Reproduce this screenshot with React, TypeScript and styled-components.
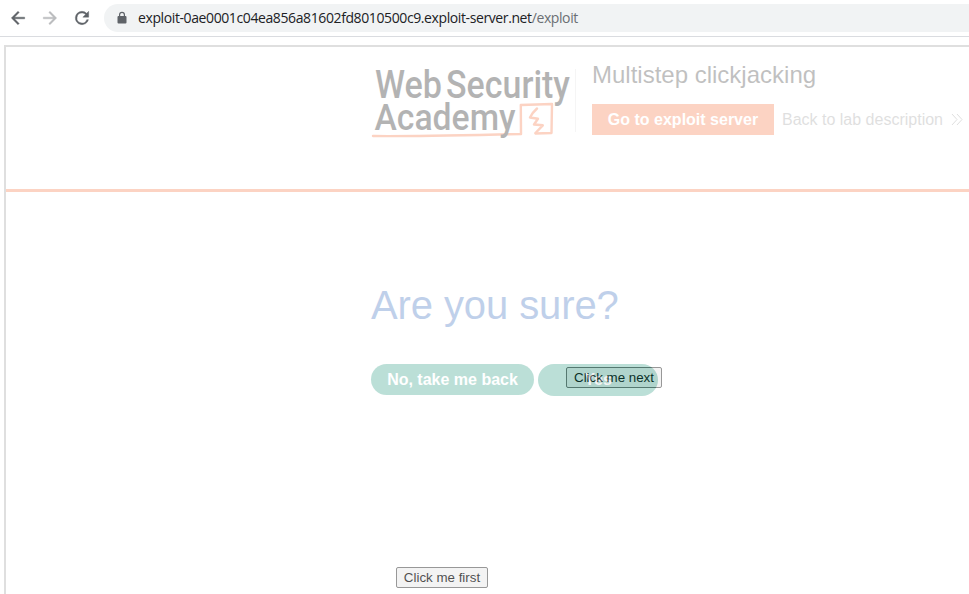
import React from 'react';
import styled, { createGlobalStyle } from 'styled-components';

const GlobalStyle = createGlobalStyle`
  *, *::before, *::after { box-sizing: border-box; }
  html, body { margin: 0; padding: 0; height: 100%; overflow: hidden; background: #fff; }
  body { font-family: "Liberation Sans", Arial, sans-serif; }
`;

const Browser = styled.div`
  display: flex;
  flex-direction: column;
  height: 594px;
  overflow: hidden;
`;

const Toolbar = styled.header`
  display: flex;
  align-items: center;
  height: 37px;
  flex: none;
  padding-left: 8px;
  border-bottom: 1px solid #dadce0;
`;

const NavIcon = styled.svg<{ $muted?: boolean }>`
  width: 20px;
  height: 20px;
  margin-right: 12px;
  flex: none;
  fill: ${(p) => (p.$muted ? '#babcbe' : '#5f6368')};
  stroke: ${(p) => (p.$muted ? '#babcbe' : '#5f6368')};
  stroke-width: 0.5;
`;

const AddressBar = styled.div`
  display: flex;
  align-items: center;
  flex: 1;
  height: 28px;
  padding-left: 11px;
  border-radius: 14px 0 0 14px;
  background: #f1f3f4;
`;

const LockIcon = styled.svg`
  width: 14px;
  height: 14px;
  margin-right: 9px;
  fill: #5f6368;
`;

const Url = styled.span`
  font: 14px/28px "Open Sans", "Noto Sans", sans-serif;
  letter-spacing: -0.395px;
  color: #202124;
  white-space: nowrap;
`;

const UrlPath = styled.span`
  color: #6b6f73;
`;

const Viewport = styled.main`
  position: relative;
  flex: 1;
  padding: 8px 0 0 4px;
`;

const DecoyButton = styled.button<{ $left: number; $top: number; $width: number }>`
  position: absolute;
  left: ${(p) => p.$left}px;
  top: ${(p) => p.$top}px;
  width: ${(p) => p.$width}px;
  height: 21px;
  padding: 0;
  border: 1px solid #6b6b6b;
  border-radius: 2px;
  background: #efefef;
  color: #000;
  font: 13.333px/18px "Liberation Sans", Arial, sans-serif;
  white-space: nowrap;
`;

const Frame = styled.section`
  position: relative;
  width: 1100px;
  height: 700px;
  border: 2px solid #999;
  background: #fff;
  opacity: 0.3;
`;

const LabHeader = styled.div`
  display: flex;
  height: 145px;
  padding: 14px 0 0 366px;
  border-bottom: 3px solid #f66f3c;
`;

const Logo = styled.svg`
  width: 204px;
  height: 86px;
  flex: none;
  overflow: visible;
  fill: #060606;
  font-family: Roboto, sans-serif;
  font-weight: 500;
`;

const LogoStroke = styled.path`
  fill: none;
  stroke: #f66f3c;
  stroke-width: 2.4;
  stroke-linecap: round;
  stroke-linejoin: round;
`;

const LabInfo = styled.div`
  padding-left: 16px;
`;

const LabTitle = styled.h2`
  margin: 0;
  font-size: 24px;
  line-height: 28px;
  font-weight: 400;
  color: #333332;
`;

const LabActions = styled.div`
  display: flex;
  align-items: center;
  margin-top: 15px;
`;

const ExploitLink = styled.a`
  width: 182px;
  height: 31px;
  line-height: 31px;
  text-align: center;
  font-size: 16px;
  font-weight: 700;
  color: #fff;
  background: #f66f3c;
`;

const BackLink = styled.a`
  margin-left: 8px;
  font-size: 16px;
  line-height: 31px;
  color: #999;
  white-space: nowrap;
`;

const Chevrons = styled.svg`
  width: 12px;
  height: 13px;
  margin-left: 8px;
  fill: none;
  stroke: #999;
`;

const Confirm = styled.div`
  padding: 90px 0 0 365px;
`;

const Question = styled.h1`
  margin: 0;
  font-size: 40px;
  line-height: 46px;
  font-weight: 400;
  letter-spacing: -0.1px;
  color: #2f66bb;
`;

const Choices = styled.div`
  display: flex;
  align-items: flex-start;
  gap: 4px;
  margin-top: 36px;
`;

const Choice = styled.button<{ $width: number; $height: number }>`
  display: flex;
  justify-content: center;
  align-items: flex-start;
  width: ${(p) => p.$width}px;
  height: ${(p) => p.$height}px;
  padding: 0;
  border: 0;
  border-radius: 16px;
  background: #23987d;
  color: #fff;
  font: 700 16px/31px "Liberation Sans", Arial, sans-serif;
`;

const AcademyLogo = () => (
  <Logo viewBox="0 0 204 86">
    <LogoStroke d="M1 75 C36 75.6 100 74 149 73 L148.8 44 L180 43 L179.5 72 L163.5 72.5" />
    <LogoStroke d="M165 47.5 Q160 52 158 56.5 L166 57.8 L162 63.5 L170.8 64.3 L163.5 72" />
    <text x="3" y="36.5" fontSize="38.5" textLength="67" lengthAdjust="spacingAndGlyphs">Web</text>
    <text x="74" y="36.5" fontSize="38.5" textLength="124" lengthAdjust="spacingAndGlyphs">Security</text>
    <text x="2.5" y="69" fontSize="37" textLength="141" lengthAdjust="spacingAndGlyphs">Academy</text>
    <path d="M203.5 8 V71" stroke="#e0e0e0" strokeWidth="1" />
  </Logo>
);

export default function App() {
  return (
    <>
      <GlobalStyle />
      <Browser>
        <Toolbar>
          <NavIcon viewBox="0 0 24 24">
            <path d="M20 11H7.83l5.59-5.59L12 4l-8 8 8 8 1.41-1.41L7.83 13H20v-2z" />
          </NavIcon>
          <NavIcon viewBox="0 0 24 24" $muted>
            <path d="m12 4-1.41 1.41L16.17 11H4v2h12.17l-5.58 5.59L12 20l8-8z" />
          </NavIcon>
          <NavIcon viewBox="0 0 24 24">
            <path d="M17.65 6.35A7.96 7.96 0 0 0 12 4a8 8 0 1 0 7.73 10h-2.08A6 6 0 1 1 12 6c1.66 0 3.14.69 4.22 1.78L13 11h7V4z" />
          </NavIcon>
          <AddressBar>
            <LockIcon viewBox="0 0 14 14">
              <path fillRule="evenodd" d="M4 5V3.8a3 3 0 0 1 6 0V5h.5q1 0 1 1v5.5q0 1-1 1h-7q-1 0-1-1V6q0-1 1-1zm1.2 0h3.6V3.8a1.8 1.8 0 0 0-3.6 0z" />
            </LockIcon>
            <Url>
              exploit-0ae0001c04ea856a81602fd8010500c9.exploit-server.net<UrlPath>/exploit</UrlPath>
            </Url>
          </AddressBar>
        </Toolbar>
        <Viewport>
          <DecoyButton $left={566} $top={330} $width={96}>Click me next</DecoyButton>
          <DecoyButton $left={396} $top={530} $width={92}>Click me first</DecoyButton>
          <Frame>
            <LabHeader>
              <AcademyLogo />
              <LabInfo>
                <LabTitle>Multistep clickjacking</LabTitle>
                <LabActions>
                  <ExploitLink>Go to exploit server</ExploitLink>
                  <BackLink>Back to lab description</BackLink>
                  <Chevrons viewBox="0 0 12 13">
                    <path d="M1 1 6 6.5 1 12M6 1 11 6.5 6 12" />
                  </Chevrons>
                </LabActions>
              </LabInfo>
            </LabHeader>
            <Confirm>
              <Question>Are you sure?</Question>
              <Choices>
                <Choice $width={163} $height={31}>No, take me back</Choice>
                <Choice $width={120} $height={32}>Yes</Choice>
              </Choices>
            </Confirm>
          </Frame>
        </Viewport>
      </Browser>
    </>
  );
}
